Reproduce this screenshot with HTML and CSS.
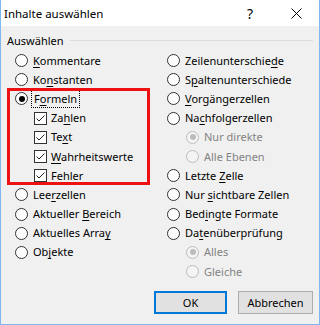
FILE: index.html
```html
<!DOCTYPE html>
<html lang="de">
<head>
    <meta charset="utf-8">
    <title>Inhalte auswählen</title>
    <link rel="stylesheet" href="styles.css">
</head>
<body>
    <div class="window">
        <div class="titlebar">
            <span class="title">Inhalte auswählen</span>
            <span class="title-btn help">?</span>
            <span class="title-btn close">
                <svg width="11" height="11" viewBox="0 0 11 11"><path d="M0.5 0.5 L10.5 10.5 M10.5 0.5 L0.5 10.5" stroke="#000" stroke-width="1" fill="none"/></svg>
            </span>
        </div>

        <div class="content">
            <div class="group-label">Auswählen</div>

            <div class="columns">
                <div class="col col-left">
                    <div class="row"><span class="radio"></span><span class="text"><u>K</u>ommentare</span></div>
                    <div class="row"><span class="radio"></span><span class="text">Ko<u>n</u>stanten</span></div>
                    <div class="row"><span class="radio checked"></span><span class="text focus">F<u>o</u>rmeln</span></div>
                    <div class="row sub-check"><span class="checkbox"><svg width="11" height="11" viewBox="0 0 11 11"><path d="M1.5 5.5 L4 8 L9.5 2.5" stroke="#222" stroke-width="1" fill="none"/></svg></span><span class="text">Za<u>h</u>len</span></div>
                    <div class="row sub-check"><span class="checkbox"><svg width="11" height="11" viewBox="0 0 11 11"><path d="M1.5 5.5 L4 8 L9.5 2.5" stroke="#222" stroke-width="1" fill="none"/></svg></span><span class="text">Te<u>x</u>t</span></div>
                    <div class="row sub-check"><span class="checkbox"><svg width="11" height="11" viewBox="0 0 11 11"><path d="M1.5 5.5 L4 8 L9.5 2.5" stroke="#222" stroke-width="1" fill="none"/></svg></span><span class="text"><u>W</u>ahrheitswerte</span></div>
                    <div class="row sub-check"><span class="checkbox"><svg width="11" height="11" viewBox="0 0 11 11"><path d="M1.5 5.5 L4 8 L9.5 2.5" stroke="#222" stroke-width="1" fill="none"/></svg></span><span class="text"><u>F</u>ehler</span></div>
                    <div class="row"><span class="radio"></span><span class="text">Lee<u>r</u>zellen</span></div>
                    <div class="row"><span class="radio"></span><span class="text">Aktueller <u>B</u>ereich</span></div>
                    <div class="row"><span class="radio"></span><span class="text">Aktuelles Arra<u>y</u></span></div>
                    <div class="row"><span class="radio"></span><span class="text">Ob<u>j</u>ekte</span></div>
                </div>

                <div class="col col-right">
                    <div class="row"><span class="radio"></span><span class="text">Zeilenunterschie<u>d</u>e</span></div>
                    <div class="row"><span class="radio"></span><span class="text">S<u>p</u>altenunterschiede</span></div>
                    <div class="row"><span class="radio"></span><span class="text"><u>V</u>orgängerzellen</span></div>
                    <div class="row"><span class="radio"></span><span class="text">Na<u>c</u>hfolgerzellen</span></div>
                    <div class="row sub-radio disabled"><span class="radio checked"></span><span class="text">Nur direkte</span></div>
                    <div class="row sub-radio disabled"><span class="radio"></span><span class="text">Alle Ebenen</span></div>
                    <div class="row"><span class="radio"></span><span class="text">Letzte <u>Z</u>elle</span></div>
                    <div class="row"><span class="radio"></span><span class="text">Nur <u>s</u>ichtbare Zellen</span></div>
                    <div class="row"><span class="radio"></span><span class="text">Bed<u>i</u>ngte Formate</span></div>
                    <div class="row"><span class="radio"></span><span class="text">Da<u>t</u>enüberprüfung</span></div>
                    <div class="row sub-radio disabled"><span class="radio checked"></span><span class="text">Alles</span></div>
                    <div class="row sub-radio disabled"><span class="radio"></span><span class="text">Gleiche</span></div>
                </div>
            </div>

            <div class="buttons">
                <button class="btn btn-default">OK</button>
                <button class="btn">Abbrechen</button>
            </div>
        </div>

        <!-- Markierung um "Formeln" -->
        <div class="highlight"></div>
    </div>
</body>
</html>
```

FILE: styles.css
```css
* {
    box-sizing: border-box;
    margin: 0;
    padding: 0;
}

body {
    font-family: 'Noto Sans', sans-serif;
    font-size: 11px;
    color: #000;
    background: #f0f0f0;
}

.window {
    position: relative;
    width: 320px;
    height: 325px;
    background: #f0f0f0;
    border: 1px solid #7fb7ee;
    border-top: none;
}

.titlebar {
    display: flex;
    align-items: center;
    height: 26px;
    background: #fff;
    padding-left: 3px;
    font-size: 11.5px;
}

.title {
    flex: 1;
}

.title-btn {
    width: 46px;
    height: 26px;
    display: flex;
    align-items: center;
    justify-content: center;
}

.help {
    font-size: 14px;
}

.close svg {
    display: block;
}

.content {
    padding: 7px 6px 0 6px;
}

.group-label {
    display: flex;
    align-items: center;
    height: 15px;
    line-height: 15px;
}

.group-label::after {
    content: "";
    flex: 1;
    height: 1px;
    background: #dcdcdc;
    margin-left: 6px;
}

.columns {
    display: flex;
    margin-top: 3px;
    padding-left: 8px;
}

.col-left {
    width: 152px;
}

.col-right {
    flex: 1;
}

.row {
    display: flex;
    align-items: center;
    height: 19.2px;
}

.row .text {
    margin-left: 5px;
    line-height: 14px;
    white-space: nowrap;
}

.row u {
    text-underline-offset: 2px;
}

.radio {
    position: relative;
    width: 13px;
    height: 13px;
    border: 1px solid #333;
    border-radius: 50%;
    background: #fff;
    flex-shrink: 0;
}

.radio.checked::after {
    content: "";
    position: absolute;
    left: 2.5px;
    top: 2.5px;
    width: 6px;
    height: 6px;
    border-radius: 50%;
    background: #000;
}

.checkbox {
    width: 13px;
    height: 13px;
    border: 1px solid #333;
    background: #fff;
    flex-shrink: 0;
}

.checkbox svg {
    display: block;
}

.sub-check {
    padding-left: 19px;
}

.sub-check .text {
    margin-left: 4px;
}

.sub-radio {
    padding-left: 19px;
}

.disabled .radio {
    border-color: #bcbcbc;
    background: #f4f4f4;
}

.disabled .radio.checked::after {
    background: #bcbcbc;
}

.disabled .text {
    color: #838383;
}

.focus {
    outline: 1px dotted #000;
    outline-offset: 1px;
    padding: 0 1px;
}

.buttons {
    display: flex;
    justify-content: flex-end;
    margin-top: 10px;
}

.btn {
    width: 75px;
    height: 23px;
    font-family: 'Noto Sans', sans-serif;
    font-size: 11px;
    color: #000;
    background: #e1e1e1;
    border: 1px solid #adadad;
}

.btn-default {
    width: 73px;
    margin-right: 11px;
    border: 2px solid #0078d7;
}

.highlight {
    position: absolute;
    left: 6px;
    top: 88px;
    width: 143px;
    height: 97px;
    border: 3px solid #ee1111;
}
```
